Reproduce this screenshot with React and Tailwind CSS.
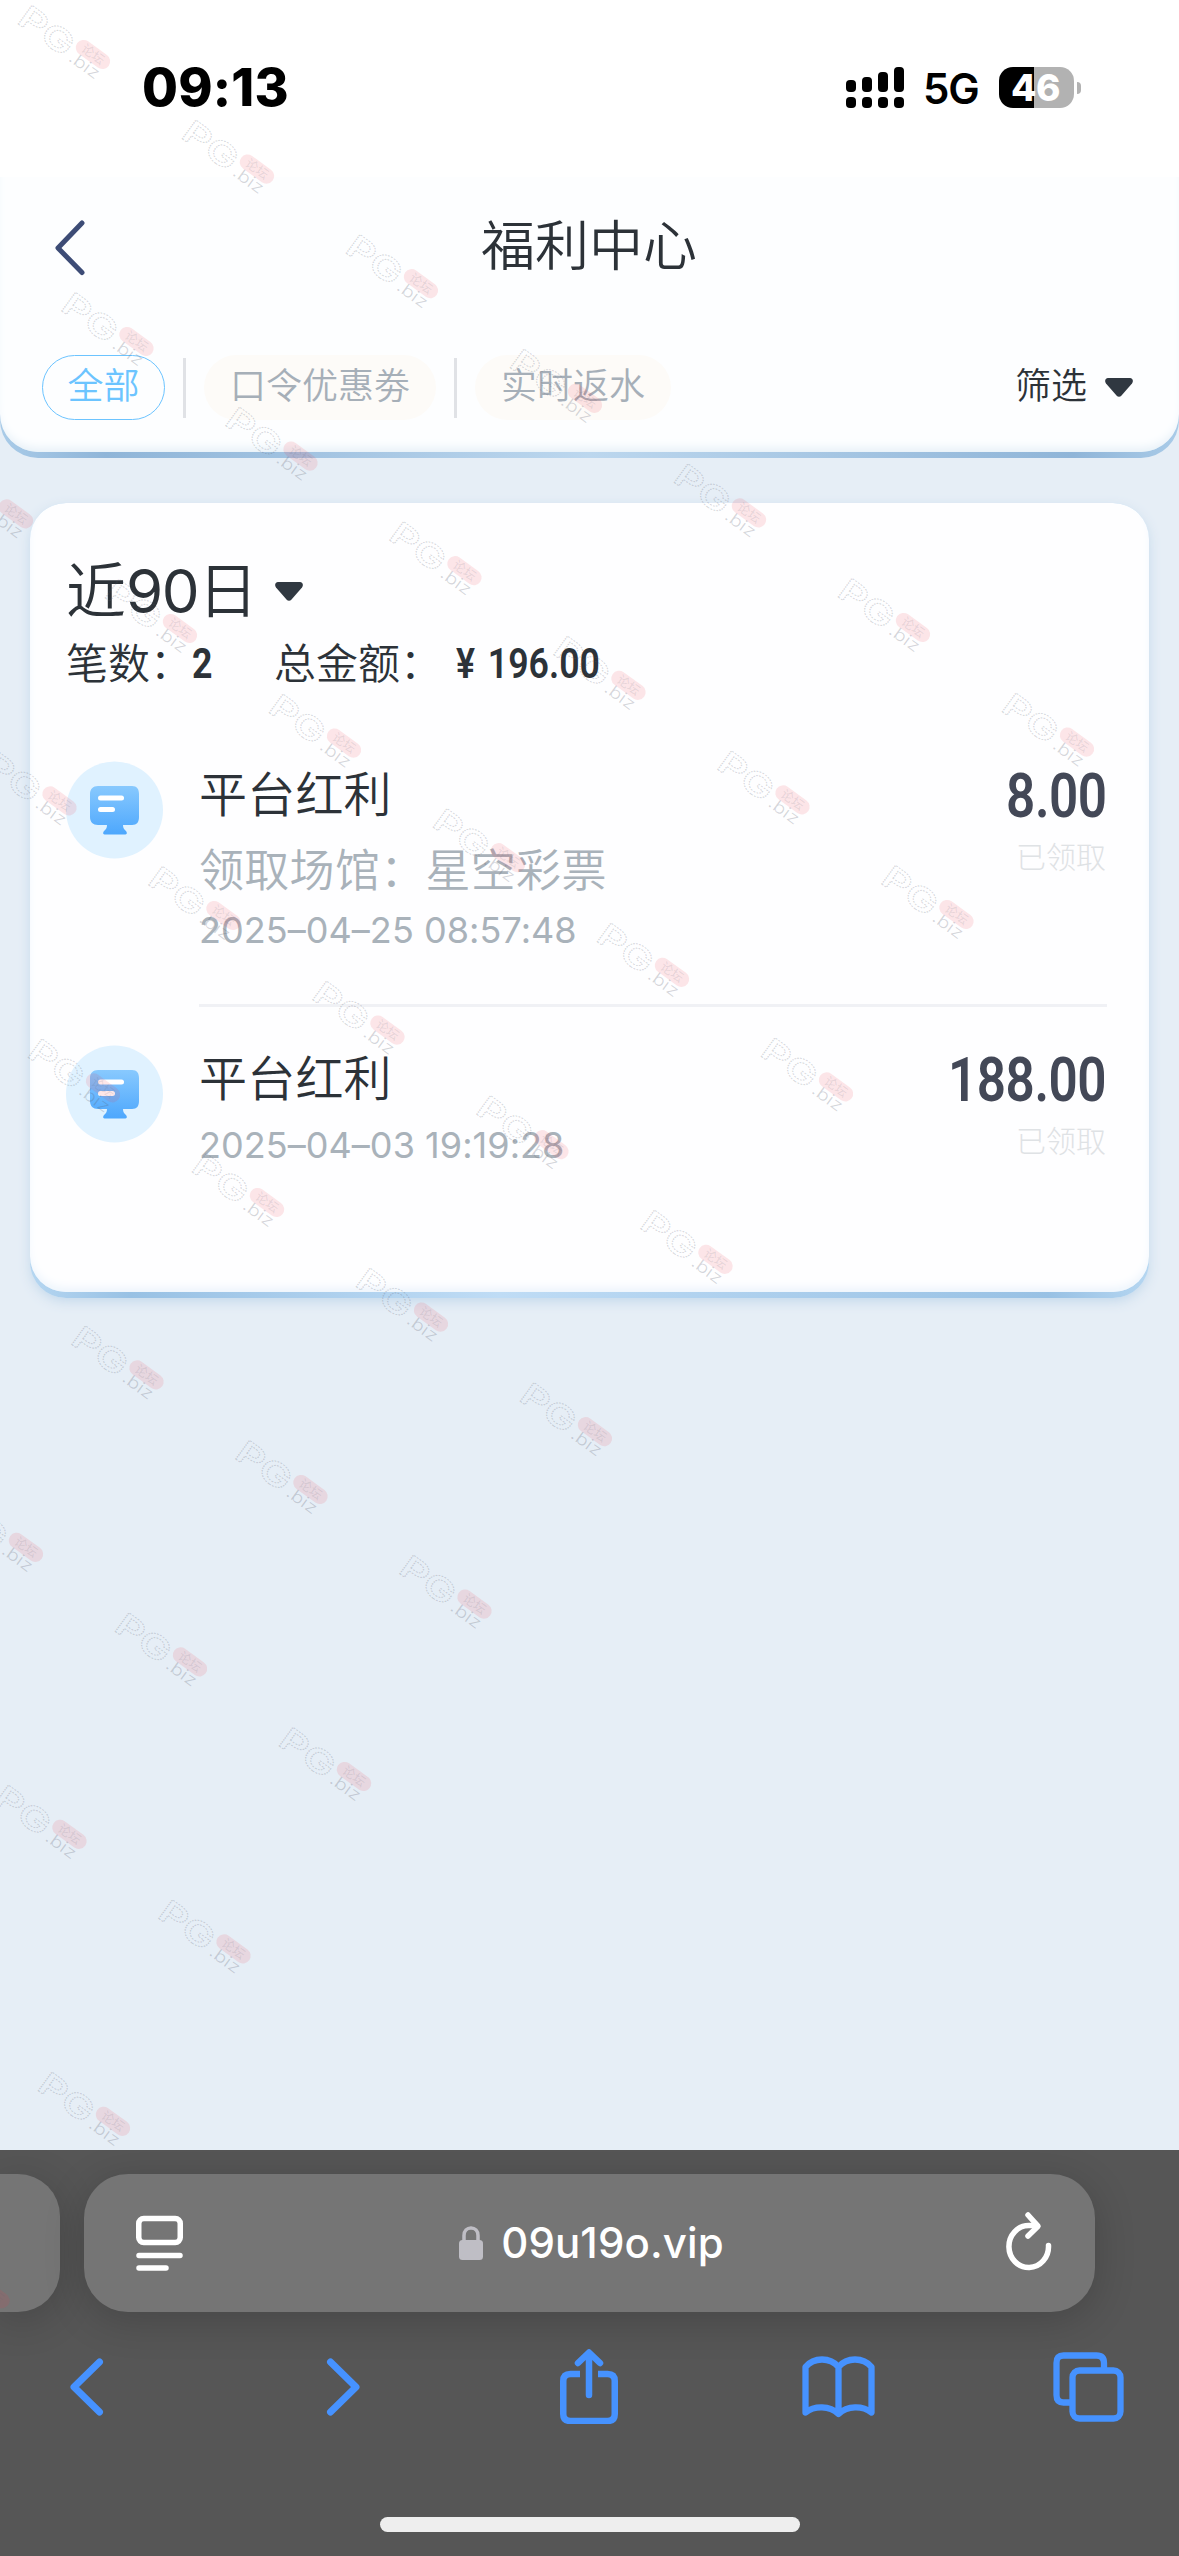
import React from "react";

const WATERMARK_ROWS = [
  [0, 0, 6],
  [1, 0, 5],
  [2, -1, 4],
  [3, -1, 3],
  [4, -1, 2],
  [5, -1, 1],
  [6, -2, 0],
  [7, -2, -1],
  [8, -2, -2],
  [9, -3, -3],
];

function Watermark() {
  const marks = [];
  for (const [row, from, to] of WATERMARK_ROWS) {
    for (let n = from; n <= to; n++) {
      marks.push([32 + n * 164 + row * 43.5, 4 + n * 114.6 + row * 287]);
    }
  }
  return (
    <svg className="pointer-events-none absolute inset-0 z-10" width="1179" height="2556" viewBox="0 0 1179 2556">
      {marks.map(([x, y]) => (
        <g key={`${x}-${y}`} transform={`translate(${x - 14} ${y + 20}) rotate(36) scale(.97)`}>
          <g fontFamily="Inter, sans-serif">
            <text x="-3" y="0" fontSize="33" fontWeight="600" fill="none" stroke="#5a6070" strokeOpacity=".24" strokeWidth="1.1" strokeDasharray="1.5 1" textLength="62" lengthAdjust="spacingAndGlyphs">PG</text>
            <text x="63" y="0" fontSize="17" fontWeight="300" fill="#5a6070" fillOpacity=".26" textLength="35" lengthAdjust="spacingAndGlyphs">.biz</text>
          </g>
          <rect x="61" y="-28" width="40" height="16" rx="8" fill="#f04050" fillOpacity=".13" />
          <text x="68" y="-15.5" fontSize="13" fontFamily="'Noto Sans CJK SC', sans-serif" fill="#5a6070" fillOpacity=".14">论坛</text>
        </g>
      ))}
    </svg>
  );
}

function StatusBar() {
  return (
    <div className="flex h-[177px] items-start bg-white pr-[98px] pl-[142px] pt-[67px]">
      <div className="text-[52px] leading-[42px] font-extrabold tracking-[0.2px] text-black">09:13</div>
      <div className="ml-auto flex h-[41px] items-center">
        <svg width="58" height="41" viewBox="0 0 58 41">
          <rect x="0" y="13" width="10" height="12" rx="4" />
          <rect x="16" y="10" width="10" height="15" rx="4" />
          <rect x="32" y="5" width="10" height="20" rx="4" />
          <rect x="48" y="0" width="10" height="25" rx="4" />
          <rect x="0" y="30" width="10" height="11" rx="4" />
          <rect x="16" y="30" width="10" height="11" rx="4" />
          <rect x="32" y="30" width="10" height="11" rx="4" />
          <rect x="48" y="30" width="10" height="11" rx="4" />
        </svg>
        <div className="ml-[19px] w-[76px] text-[42px] leading-[42px] font-semibold tracking-[-1.2px] text-black">
          <span className="relative top-[1px]">5G</span>
        </div>
        <div className="flex h-[41px] w-[75px] items-center justify-center rounded-[14px] bg-[linear-gradient(90deg,#000_35px,#b2b2b2_35px)] pr-[2px] text-[37px] font-extrabold tracking-[-0.5px] text-white">
          46
        </div>
        <div className="ml-[3px] h-3 w-1 rounded-r-full bg-[#b2b2b2]" />
      </div>
    </div>
  );
}

function Caret() {
  return (
    <svg width="28" height="19" viewBox="0 0 28 19">
      <path d="M3 0h22c2.600 0 3.800 3 2 5.500L16.500 17.600c-1.400 1.600-3.600 1.600-5 0L1 5.500C-.800 3 .400 0 3 0z" fill="#303841" />
    </svg>
  );
}

function Header() {
  return (
    <div className="h-[281px] rounded-b-[38px] bg-[linear-gradient(90deg,#a9cbe8,#8fb5d8_9%,#bcd7ee_50%,#8fb5d8_91%,#a9cbe8)]">
      <div className="h-[275px] rounded-b-[38px] bg-[#fdfeff] shadow-[inset_0_-8px_12px_-6px_#dfecf5]">
        <div className="grid h-[138px] grid-cols-3 items-center pl-[51px]">
          <svg width="34" height="60" viewBox="0 0 34 60" fill="none" className="mt-[4px]">
            <path d="M31 5 7 30l24 24.500" stroke="#3d4c76" strokeWidth="5" strokeLinecap="round" strokeLinejoin="round" />
          </svg>
          <h1 className="-ml-[53px] w-[430px] text-center text-[54px] font-[350] text-[#2c3238]">福利中心</h1>
        </div>
        <div className="flex items-center pt-[40px] pr-[46px] pl-[42px] text-[36px] font-[350] text-[#a6afb8]">
          <div className="flex h-[65px] w-[123px] items-center justify-center rounded-full border border-[#6cc4ff] pb-1 text-[#6cc4ff]">全部</div>
          <div className="mx-[18px] h-[60px] w-[3px] bg-[#e0e2e6]" />
          <div className="flex h-[65px] w-[232px] items-center justify-center rounded-full bg-[#fdfbf8] pb-1">口令优惠劵</div>
          <div className="mx-[18px] h-[60px] w-[3px] bg-[#e0e2e6]" />
          <div className="flex h-[65px] w-[196px] items-center justify-center rounded-full bg-[#fdfbf8] pb-1">实时返水</div>
          <div className="ml-auto flex items-center gap-[18px] text-[#2c3238]">
            <span className="relative -top-[2px]">筛选</span>
            <Caret />
          </div>
        </div>
      </div>
    </div>
  );
}

function PlatformIcon() {
  return (
    <svg width="98" height="98" viewBox="0 0 98 98" className="shrink-0">
      <defs>
        <linearGradient id="monitor" x1="0" y1="0" x2="0" y2="1">
          <stop offset="0" stopColor="#88c9fe" />
          <stop offset="1" stopColor="#4da7fd" />
        </linearGradient>
      </defs>
      <circle cx="48.500" cy="49" r="48.500" fill="#e0f2ff" />
      <path
        d="M32 25h34c5 0 7 3 7 8v23c0 5-2 8-7 8h-9c0 3 1 4 3 6 2 3 0 3.500-2 3.500H40c-2 0-4-.500-2-3.500 2-2 3-3 3-6h-9c-5 0-8-3-8-8V33c0-5 3-8 8-8z"
        fill="url(#monitor)"
      />
      <rect x="32" y="34.500" width="26" height="5" rx="2.500" fill="#fff" />
      <rect x="32" y="46" width="17" height="5" rx="2.500" fill="#fff" />
    </svg>
  );
}

function Record({ amount, venue, time, last }) {
  return (
    <div className="flex gap-[35px]">
      <PlatformIcon />
      <div className={last ? "flex flex-1" : "flex h-[246px] flex-1 border-b-[3px] border-[#f0f1f5]"}>
        <div className="flex-1 text-[#a9b2ba]">
          <div className="mt-[2px] text-[48px] leading-[64px] font-[350] tracking-[0.2px] text-[#2c3238]">平台红利</div>
          {venue && (
            <div className="mt-[12px] text-[45px] leading-[64px] font-[350] tracking-[0.3px]">领取场馆：{venue}</div>
          )}
          <div className={venue ? "mt-[3px] text-[36px] leading-[48px] font-normal tracking-[0.05px]" : "mt-[10px] text-[36px] leading-[48px] font-normal tracking-[0.05px]"}>{time}</div>
        </div>
        <div className="flex flex-col items-end">
          <div className="mt-[2px] mr-px origin-right scale-x-[0.84] font-['Roboto'] text-[61px] leading-[66px] font-semibold tracking-[-0.6px] text-[#434857]">{amount}</div>
          <div className="mt-[6px] mr-px text-[30px] leading-[44px] font-light text-[#dfe2e5]">已领取</div>
        </div>
      </div>
    </div>
  );
}

function Records() {
  return (
    <div className="mx-[30px] mt-[45px] h-[795px] rounded-[36px] bg-[linear-gradient(90deg,#b5d6f1,#98c1e4_9%,#bfdcf5_42%,#98c1e4_91%,#b5d6f1)] shadow-[0_4px_14px_-2px_#bcd4e9]">
      <div className="h-[789px] rounded-[36px] bg-[#fefeff] pr-[42px] pl-[36px] pt-[52px] text-[#2c3238] shadow-[inset_0_-6px_12px_-4px_#e6f1fb]">
        <div className="flex h-[72px] items-center text-[60px] leading-[72px] font-[350]">
          近<span className="w-[72px] font-normal tracking-[-1.5px]">90</span>日
          <span className="ml-[17px] flex">
            <Caret />
          </span>
        </div>
        <div className="mt-[12px] flex h-[50px] items-center text-[42px] leading-[50px] font-[350]">
          笔数：
          <b className="w-[82px] origin-left scale-x-[0.85] font-['Roboto'] font-bold">2</b>
          总金额：
          <b className="ml-[14px] origin-left scale-x-[0.85] font-['Roboto'] font-semibold whitespace-pre">
            ¥<span className="ml-[15px]">196.00</span>
          </b>
        </div>
        <div className="mt-[72px] flex flex-col gap-[38px]">
          <Record amount="8.00" venue="星空彩票" time="2025–04–25 08:57:48" />
          <Record amount="188.00" time="2025–04–03 19:19:28" last />
        </div>
      </div>
    </div>
  );
}

function Browser() {
  return (
    <div className="flex h-[406px] flex-col overflow-hidden bg-[#565656] pt-[24px]">
      <div className="flex h-[138px] gap-6">
        <div className="w-[60px] rounded-r-[42px] bg-[#757575] shadow-[0_8px_40px_#0000002e]" />
        <div className="flex w-[1011px] items-center rounded-[44px] bg-[#757575] px-[52px] shadow-[0_8px_40px_#0000002e]">
          <svg width="47" height="56" viewBox="0 0 47 56" fill="none" stroke="#fff" strokeWidth="5.500" strokeLinecap="round">
            <rect x="2.750" y="3.500" width="41.500" height="24" rx="5" />
            <path d="M3 40.500h41M3 53h27" />
          </svg>
          <div className="flex flex-1 items-center justify-center pr-[6px]">
            <svg width="24" height="34" viewBox="0 0 24 34">
              <path d="M5 16v-6.500C5 5 8 2 12 2s7 3 7 7.500V16" fill="none" stroke="#bfbec5" strokeWidth="3.500" />
              <rect x="0" y="14" width="24" height="20" rx="3.500" fill="#bfbec5" />
            </svg>
            <span className="ml-[18px] text-[42px] leading-[50px] font-medium tracking-[0.1px] text-white">09u19o.vip</span>
          </div>
          <svg width="46" height="64" viewBox="0 0 46 64" fill="none" stroke="#fff" strokeWidth="5.500" strokeLinecap="round" strokeLinejoin="round" className="-mr-[9px]">
            <path d="M42.500 34.500A19.800 21 0 1 1 22.700 14.500h8" />
            <path d="m22 4 10 11.200L22 25" />
          </svg>
        </div>
      </div>
      <div className="mt-[36px] flex h-[77px] items-center pl-[69px]">
        <svg width="35" height="58" viewBox="0 0 35 58" fill="none" stroke="#4692ff" strokeWidth="7" strokeLinecap="round" strokeLinejoin="round">
          <path d="M30.500 4 5 29l25.500 25" />
        </svg>
        <svg width="35" height="58" viewBox="0 0 35 58" fill="none" stroke="#4692ff" strokeWidth="7" strokeLinecap="round" strokeLinejoin="round" className="ml-[222px]">
          <path d="m4.500 4 25.500 25L4.500 54" />
        </svg>
        <svg width="58" height="75" viewBox="0 0 58 75" fill="none" stroke="#4692ff" strokeWidth="6.500" className="ml-[199px]">
          <path d="M20 25H10.500Q3.250 25 3.250 32v33q0 7 7.250 7h37q7.250 0 7.250-7V32q0-7-7.250-7H38" />
          <path d="M29 46V4M18 14 29 3.500 40 14" strokeLinecap="round" strokeLinejoin="round" />
        </svg>
        <svg width="73" height="62" viewBox="0 0 73 62" fill="none" stroke="#4692ff" strokeWidth="6.300" strokeLinecap="round" strokeLinejoin="round" className="ml-[184px]">
          <path d="M36.500 11v46.500M36.500 11C28 1 12 1 3.500 11v45.500c9-7 24-7 33 1.500 9-8.500 24-8.500 33-1.500V11C61 1 45 1 36.500 11z" />
        </svg>
        <svg width="71" height="70" viewBox="0 0 71 70" fill="none" stroke="#4692ff" strokeWidth="6.300" className="ml-[178px]">
          <path d="M51 16v-5q0-7.500-7.500-7.500h-33Q3.500 3.500 3.500 11v32q0 7.500 7 7.500H17" />
          <rect x="19.500" y="18.500" width="48" height="48" rx="7" />
        </svg>
      </div>
      <div className="mx-auto mt-[92px] h-[15px] w-[420px] rounded-full bg-[#eee]" />
    </div>
  );
}

export default function App() {
  return (
    <div className="relative flex h-[2556px] w-[1179px] flex-col overflow-hidden bg-[#e6eef6] font-['Inter','Noto_Sans_CJK_SC',sans-serif]">
      <StatusBar />
      <Header />
      <Records />
      <div className="mt-auto">
        <Browser />
      </div>
      <Watermark />
    </div>
  );
}
